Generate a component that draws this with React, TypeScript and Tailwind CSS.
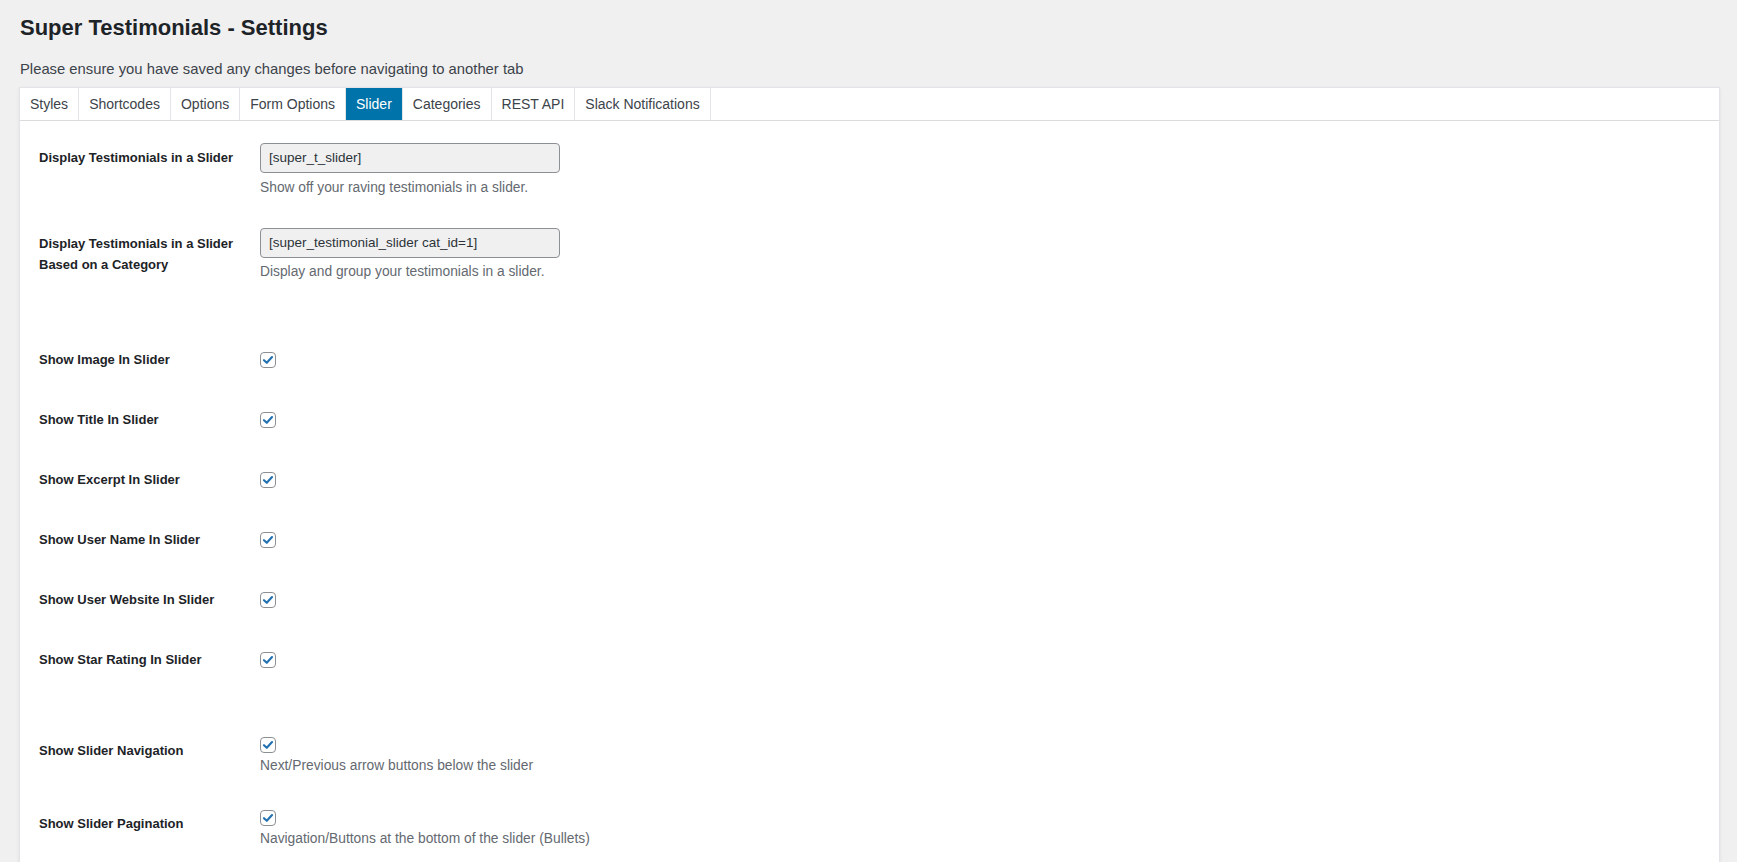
const tabs = ['Styles', 'Shortcodes', 'Options', 'Form Options', 'Slider', 'Categories', 'REST API', 'Slack Notifications'];

const toggles = [
  'Show Image In Slider',
  'Show Title In Slider',
  'Show Excerpt In Slider',
  'Show User Name In Slider',
  'Show User Website In Slider',
  'Show Star Rating In Slider',
];

function Checkbox() {
  return (
    <span className="flex size-[16px] shrink-0 items-center justify-center rounded-[4px] border border-[#8c8f94] bg-white">
      <svg viewBox="0 0 16 16" className="size-[14px]">
        <path d="M3.4 8.2 L6.6 11.2 L12.6 4.6" fill="none" stroke="#2271b1" strokeWidth="2.4" strokeLinecap="round" strokeLinejoin="round" />
      </svg>
    </span>
  );
}

function ShortcodeField({ value }: { value: string }) {
  return (
    <div className="flex h-[30px] w-[300px] items-center rounded-[4px] border border-[#8c8f94] bg-[#f0f0f1] px-[8px] text-[13.5px] text-[#2c3338]">
      {value}
    </div>
  );
}

function Label({ children, className = '' }: { children: React.ReactNode; className?: string }) {
  return <div className={`w-[221px] shrink-0 text-[13px] font-bold text-[#1d2327] ${className}`}>{children}</div>;
}

function Description({ children, className = '' }: { children: React.ReactNode; className?: string }) {
  return <p className={`text-[13.8px] leading-[18px] text-[#646970] ${className}`}>{children}</p>;
}

export default function App() {
  return (
    <div className="min-h-screen bg-[#f0f0f1] pl-[19px] pr-[17px] pt-[13px] font-['Liberation_Sans',Arial,sans-serif]">
      <h1 className="pl-px text-[22px] font-bold leading-[30px] text-[#1d2327]">Super Testimonials - Settings</h1>
      <p className="mt-[16px] pl-px text-[14.8px] leading-[20px] text-[#3c434a]">Please ensure you have saved any changes before navigating to another tab</p>

      <div className="mt-[8px] border border-[#e2e4e7] bg-white pb-[60px] shadow-[0_1px_3px_rgba(0,0,0,0.08)]">
        <div className="flex h-[33px] border-b border-[#dcdcde]">
          {tabs.map((tab) => (
            <div
              key={tab}
              className={`flex items-center border-r border-[#e2e4e7] px-[10px] text-[14px] ${tab === 'Slider' ? 'bg-[#0073aa] text-white' : 'text-[#3c434a]'}`}
            >
              {tab}
            </div>
          ))}
        </div>

        <div className="pl-[19px]">
          <div className="mt-[22px] flex">
            <Label className="pt-[5px] leading-[20px]">Display Testimonials in a Slider</Label>
            <div>
              <ShortcodeField value="[super_t_slider]" />
              <Description className="mt-[6px]">Show off your raving testimonials in a slider.</Description>
            </div>
          </div>

          <div className="mt-[31px] flex">
            <Label className="pt-[5px] leading-[21px]">
              Display Testimonials in a Slider
              <br />
              Based on a Category
            </Label>
            <div>
              <ShortcodeField value="[super_testimonial_slider cat_id=1]" />
              <Description className="mt-[5px]">Display and group your testimonials in a slider.</Description>
            </div>
          </div>

          <div className="mt-[71px] flex flex-col gap-[44px]">
            {toggles.map((label) => (
              <div key={label} className="flex h-[16px] items-center">
                <Label className="leading-[20px]">{label}</Label>
                <Checkbox />
              </div>
            ))}
          </div>

          <div className="mt-[69px] flex">
            <Label className="pt-[4px] leading-[20px]">Show Slider Navigation</Label>
            <div>
              <Checkbox />
              <Description className="mt-[4px]">Next/Previous arrow buttons below the slider</Description>
            </div>
          </div>

          <div className="mt-[35px] flex">
            <Label className="pt-[4px] leading-[20px]">Show Slider Pagination</Label>
            <div>
              <Checkbox />
              <Description className="mt-[4px]">Navigation/Buttons at the bottom of the slider (Bullets)</Description>
            </div>
          </div>
        </div>
      </div>
    </div>
  );
}
